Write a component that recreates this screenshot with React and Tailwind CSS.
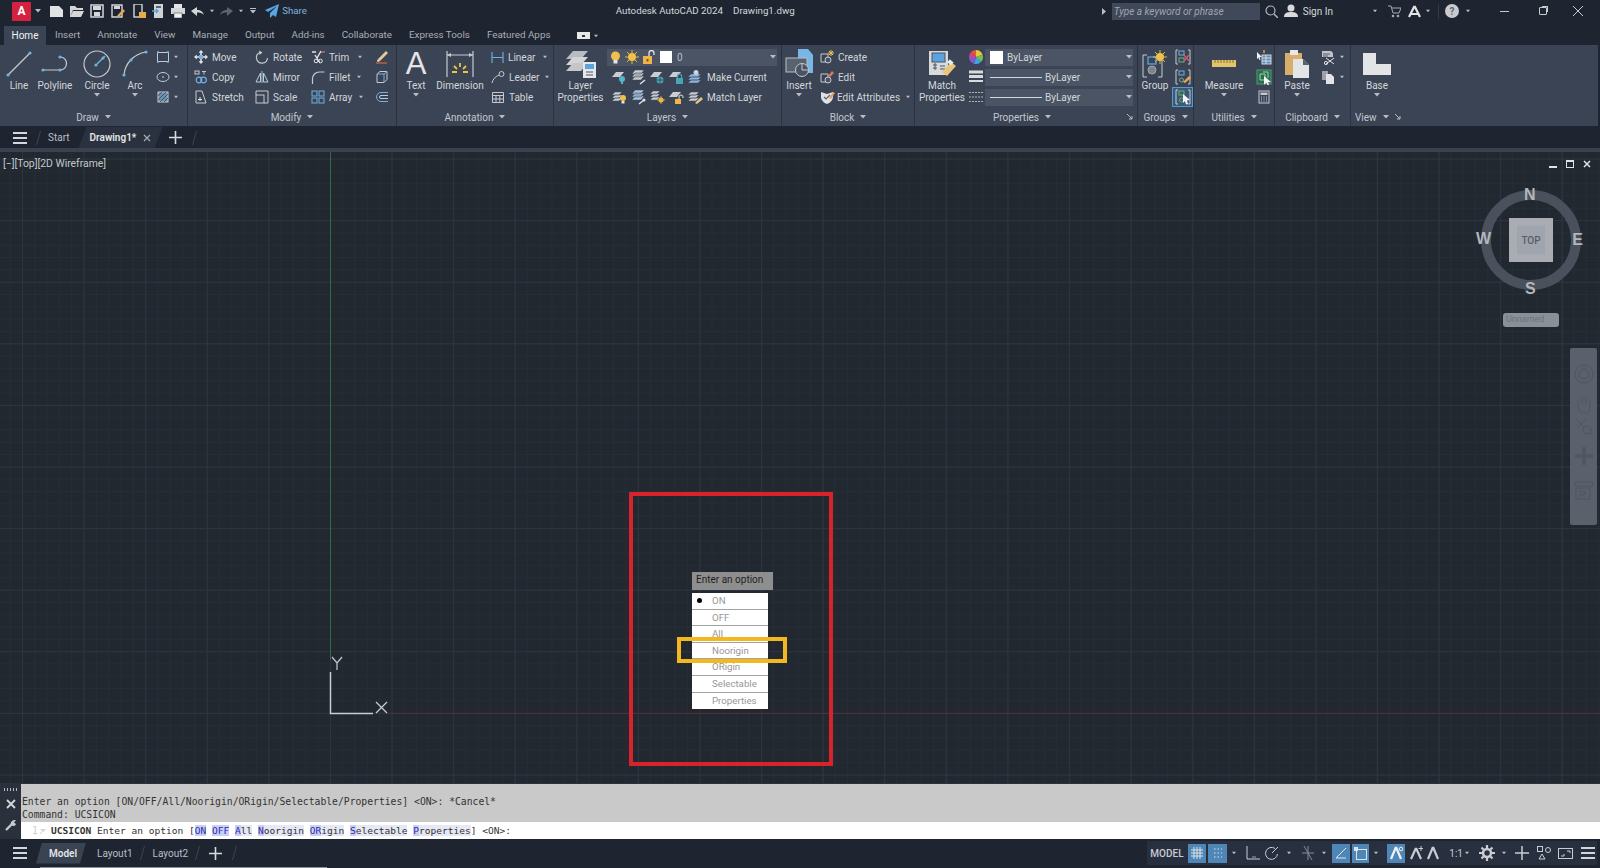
import React from "react";

// shared svg wrapper, w/h are also the viewBox so paths use real pixels
function Ic({ s = 16, w, h, children, className = "" }) {
  const W = w || s;
  const H = h || s;
  return (
    <svg width={W} height={H} viewBox={`0 0 ${W} ${H}`} fill="none" className={`shrink-0 ${className}`}>
      {children}
    </svg>
  );
}

const Caret = ({ className = "" }) => (
  <svg width="6" height="4" viewBox="0 0 6 4" className={`shrink-0 ${className}`}>
    <path d="M0 0h6L3 3.5z" fill="#b9bec6" />
  </svg>
);

const Dot = ({ x, y }) => <circle cx={x} cy={y} r="1.6" fill="#6fb2e4" />;
const LINE = "#c6cad0";
const BLUE = "#6fb2e4";

/* ---------- draw icons ---------- */
const LineIcon = () => (
  <Ic w={26} h={27}>
    <path d="M2 25L24 3" stroke={LINE} strokeWidth="1.2" />
    <Dot x={2} y={25} />
    <Dot x={24} y={3} />
  </Ic>
);
const PolylineIcon = () => (
  <Ic w={28} h={20}>
    <path d="M2 16h17c4 0 6.5-3 6.5-6.5S23 3 19 3" stroke={LINE} strokeWidth="1.2" />
    <Dot x={2} y={16} />
    <Dot x={19} y={16} />
    <Dot x={19} y={3} />
  </Ic>
);
const CircleIcon = () => (
  <Ic w={28} h={28}>
    <circle cx="14" cy="14" r="13" stroke={LINE} strokeWidth="1.2" />
    <path d="M14 14l8-8" stroke={BLUE} strokeWidth="1.4" />
    <Dot x={13} y={15} />
    <Dot x={20} y={8} />
  </Ic>
);
const ArcIcon = () => (
  <Ic w={26} h={27}>
    <path d="M2 25C3 13 12 4 24 2" stroke={LINE} strokeWidth="1.2" />
    <Dot x={2} y={25} />
    <Dot x={9} y={10} />
    <Dot x={24} y={2} />
  </Ic>
);
const RectIcon = () => (
  <Ic s={14}>
    <rect x="1.5" y="2.5" width="11" height="9" stroke={LINE} />
    <path d="M1 2h2M11 2h2M1 12h2M11 12h2" stroke={BLUE} strokeWidth="1.4" />
  </Ic>
);
const EllipseIcon = () => (
  <Ic s={14}>
    <ellipse cx="7" cy="7" rx="6" ry="4.5" stroke={LINE} />
    <circle cx="7" cy="7" r="1" fill={BLUE} />
  </Ic>
);
const HatchIcon = () => (
  <Ic s={14}>
    <rect x="2" y="2" width="10" height="10" fill="#6f8fb0" stroke={LINE} />
    <path d="M2 6l4-4M2 10l8-8M4 12l8-8M8 12l4-4" stroke="#2f3d50" strokeWidth=".7" />
  </Ic>
);

/* ---------- modify icons ---------- */
const MoveIcon = () => (
  <Ic s={14}>
    <path d="M7 1v12M1 7h12" stroke="#e2e4e7" strokeWidth="1.6" />
    <path d="M7 0l2.5 2.8h-5zM7 14l2.5-2.8h-5zM0 7l2.8-2.5v5zM14 7l-2.8-2.5v5z" fill="#e2e4e7" />
    <rect x="5" y="5" width="4" height="4" fill={BLUE} />
  </Ic>
);
const RotateIcon = () => (
  <Ic s={14}>
    <path d="M5 2.5A5.5 5.5 0 1 0 12.5 8" stroke={LINE} strokeWidth="1.2" />
    <path d="M4 .5l3.5 2-3 2.5z" fill={LINE} />
  </Ic>
);
const TrimIcon = () => (
  <Ic s={14}>
    <path d="M1 2h4M4 5l5 8M10 1L6 8" stroke="#e2e4e7" strokeWidth="1.4" />
    <circle cx="9.5" cy="11" r="1.8" stroke="#e2e4e7" />
    <circle cx="5" cy="11" r="1.8" stroke="#e2e4e7" />
    <path d="M10 2h4" stroke="#dd7777" strokeWidth="1.2" />
  </Ic>
);
const EraseIcon = () => (
  <Ic s={14}>
    <path d="M3 9l8-8 2 2-8 8z" fill="#e5c99a" />
    <path d="M3 9l2 2-2 1-1-1z" fill="#e2e4e7" />
    <path d="M1 13h11" stroke="#d9693a" strokeWidth="1.2" />
  </Ic>
);
const CopyIcon = () => (
  <Ic s={14}>
    <rect x="1" y="1" width="4" height="3" stroke={LINE} />
    <path d="M8 1.5h4M10 1.5v3" stroke={LINE} />
    <circle cx="5" cy="10" r="2.8" stroke={BLUE} strokeWidth="1.2" />
    <circle cx="9.5" cy="10" r="2.8" stroke={BLUE} strokeWidth="1.2" />
  </Ic>
);
const MirrorIcon = () => (
  <Ic s={14}>
    <path d="M7 1v12" stroke={BLUE} strokeWidth="1.2" />
    <path d="M5.5 3v9H1zM8.5 3v9H13z" stroke={LINE} />
  </Ic>
);
const FilletIcon = () => (
  <Ic s={14}>
    <path d="M1.5 14V9c0-4 3-7 7-7h5" stroke={LINE} strokeWidth="1.2" />
  </Ic>
);
const BoxIcon = () => (
  <Ic s={14}>
    <path d="M2 4l3-2.5h7v8L9 12.5H2z" stroke={LINE} />
    <path d="M2 4h7v8.500M9 4l3-2.5" stroke={BLUE} />
  </Ic>
);
const StretchIcon = () => (
  <Ic s={14}>
    <path d="M2 1h6l4 12H2z" stroke={LINE} />
    <path d="M6 7v4M4 9.5h4" stroke="#e2e4e7" />
  </Ic>
);
const ScaleIcon = () => (
  <Ic s={14}>
    <rect x="1" y="5" width="8" height="8" stroke={LINE} />
    <path d="M1 5V1h12v12H9" stroke={LINE} />
  </Ic>
);
const ArrayIcon = () => (
  <Ic s={14}>
    <rect x="1" y="1" width="5" height="5" stroke={BLUE} />
    <rect x="8" y="1" width="5" height="5" stroke={BLUE} />
    <rect x="1" y="8" width="5" height="5" stroke={BLUE} />
    <rect x="8" y="8" width="5" height="5" stroke={BLUE} />
  </Ic>
);
const OffsetIcon = () => (
  <Ic s={14}>
    <path d="M13 2.5H6a4.500 4.500 0 0 0 0 9h7" stroke={BLUE} />
    <path d="M13 5.5H6a1.500 1.500 0 0 0 0 3h7" stroke={LINE} />
  </Ic>
);

/* ---------- annotation icons ---------- */
const DimensionIcon = () => (
  <Ic w={28} h={28}>
    <path d="M1 1v26M27 1v26" stroke={LINE} strokeWidth="1.2" />
    <path d="M1 5h26" stroke={LINE} />
    <path d="M1 5l4-2v4zM27 5l-4-2v4z" fill={LINE} />
    <path d="M14 13v4M8 16l3 3M20 16l-3 3M6 22h5M22 22h-5" stroke="#e6c64a" strokeWidth="1.8" />
  </Ic>
);
const LinearIcon = () => (
  <Ic s={13}>
    <path d="M1 1v11M12 1v11M1 6.5h11" stroke={BLUE} strokeWidth="1.1" />
  </Ic>
);
const LeaderIcon = () => (
  <Ic s={14}>
    <path d="M1 13c1-4 3-6 7-8" stroke={LINE} />
    <circle cx="10.5" cy="4" r="2.5" stroke={LINE} />
  </Ic>
);
const TableIcon = () => (
  <Ic s={14}>
    <path d="M1.5 2.5h11v10h-11zM1.5 5.5h11M1.5 9h11M5 5.5v7M8.8 5.5v7" stroke={LINE} />
  </Ic>
);

/* ---------- layer icons ---------- */
const LayerPropsIcon = () => (
  <Ic w={32} h={28}>
    <path d="M1 9L8 1h15l-7 8z" fill="#b8bcc0" />
    <path d="M1 15L8 7h15l-7 8z" fill="#d2d4d6" />
    <path d="M1 21L8 13h15l-7 8z" fill="#c4c6c8" />
    <rect x="18" y="12" width="13" height="16" fill="#e6e7e8" />
    <rect x="20" y="14" width="9" height="5" fill="#5ba3dd" />
    <path d="M21 22h7M21 25h7" stroke="#4a5464" />
  </Ic>
);
const Bulb = ({ on = "#f1c04a" }) => (
  <Ic s={13}>
    <circle cx="6.5" cy="5" r="4.5" fill={on} />
    <rect x="4.5" y="9" width="4" height="3.5" fill="#e2e4e7" />
  </Ic>
);
const Sun = () => (
  <Ic s={14}>
    <circle cx="7" cy="7" r="4" fill="#f1c04a" />
    <path d="M7 0v3M7 11v3M0 7h3M11 7h3M2 2l2 2M10 10l2 2M12 2l-2 2M4 10l-2 2" stroke="#e3b23e" />
  </Ic>
);
const OpenLock = () => (
  <Ic s={14}>
    <rect x="1" y="6" width="9" height="8" fill="#f0b447" />
    <path d="M7 6V3a2.5 2.5 0 0 1 5 0v2" stroke="#e2e4e7" strokeWidth="1.3" />
    <rect x="4.5" y="9" width="2" height="2.5" fill="#7b5a1c" />
  </Ic>
);
const LayerBase = ({ children }) => (
  <Ic s={16}>
    <path d="M1 8l4-5h8l-4 5z" fill="#c9ccd0" />
    {children}
  </Ic>
);
const L1 = () => <LayerBase><circle cx="11" cy="10" r="3" fill="#56b6c9" /><rect x="10" y="12.5" width="2" height="2.5" fill="#56b6c9" /></LayerBase>;
const L2 = () => (
  <Ic s={16}>
    <path d="M2 5l3-4h9l-3 4zM2 8l3-4h9l-3 4zM2 11l3-4h9l-3 4z" fill="#c9ccd0" stroke="#3b4454" strokeWidth=".5" />
    <path d="M10 15l5-4" stroke="#e2e4e7" strokeWidth="1.4" />
  </Ic>
);
const L3 = () => <LayerBase><circle cx="11" cy="11" r="3.5" fill="#4ba3b8" /><path d="M7.5 11h7M11 7.5v7" stroke="#2c3a48" strokeWidth=".7" /></LayerBase>;
const L4 = () => <LayerBase><rect x="8" y="9" width="7" height="6" fill="#4ba3b8" /><path d="M9.5 9V7a2 2 0 0 1 4 0v2" stroke="#4ba3b8" strokeWidth="1.2" /></LayerBase>;
const MakeCurrentIcon = () => (
  <Ic s={16}>
    <path d="M1 8l3-3h10l-3 3zM1 11l3-3h10l-3 3zM1 14l3-3h10l-3 3z" fill="#8db7dc" stroke="#3b4454" strokeWidth=".5" />
    <circle cx="9" cy="3.5" r="2.5" fill="#c6d6e6" />
  </Ic>
);
const L5 = () => (
  <Ic s={16}>
    <path d="M1 6l3-3h7L8 6zM1 9l3-3h7L8 9zM1 12l3-3h7l-3 3z" fill="#c9ccd0" stroke="#3b4454" strokeWidth=".5" />
    <circle cx="12" cy="9" r="3" fill="#f1c04a" />
    <rect x="10.5" y="12" width="3" height="2.5" fill="#e2e4e7" />
  </Ic>
);
const L6 = () => (
  <Ic s={16}>
    <path d="M2 5l3-4h9l-3 4zM2 8l3-4h9l-3 4zM2 11l3-4h9l-3 4z" fill="#a9c4de" stroke="#3b4454" strokeWidth=".5" />
    <path d="M9 15l5-4" stroke="#e2e4e7" strokeWidth="1.4" />
    <circle cx="14" cy="11" r="1.5" fill="#e2e4e7" />
  </Ic>
);
const L7 = () => (
  <Ic s={16}>
    <path d="M1 5l3-3h7L8 5zM1 8l3-3h7L8 8zM1 11l3-3h7l-3 3z" fill="#c9ccd0" stroke="#3b4454" strokeWidth=".5" />
    <circle cx="12" cy="11" r="2.5" fill="#f1c04a" />
    <path d="M12 7v8M8 11h8" stroke="#e3b23e" strokeWidth=".8" />
  </Ic>
);
const L8 = () => (
  <LayerBase>
    <rect x="7" y="10" width="6" height="5" fill="#f0b447" />
    <path d="M11 10V8a2 2 0 0 1 4 0v1" stroke="#e2e4e7" />
  </LayerBase>
);
const MatchLayerIcon = () => (
  <Ic s={16}>
    <path d="M1 6l3-3h8L9 6zM1 9l3-3h8L9 9zM1 12l3-3h8l-3 3z" fill="#c9ccd0" stroke="#3b4454" strokeWidth=".5" />
    <path d="M8 14l6-6 2 2-6 5z" fill="#e8c57a" />
  </Ic>
);

/* ---------- block / props ---------- */
const InsertIcon = () => (
  <Ic w={28} h={30}>
    <path d="M13 0h10l5 6v18H13z" fill="#78b6e8" />
    <rect x="1" y="9" width="21" height="14" fill="#59636f" stroke="#b9bec4" />
    <circle cx="17" cy="21" r="6.5" fill="#4a5464" stroke="#c6cad0" />
    <path d="M17 21v-6M17 21h6" stroke="#c6cad0" />
  </Ic>
);
const CreateIcon = () => (
  <Ic s={14}>
    <path d="M1 4h7v8H1z" stroke={LINE} />
    <circle cx="8" cy="10" r="3" fill="#4a5464" stroke={LINE} />
    <path d="M11 0v6M8 3h6M9 1l4 4M13 1L9 5" stroke="#f1c04a" />
  </Ic>
);
const EditIcon = () => (
  <Ic s={14}>
    <path d="M1 4h7v8H1z" stroke={LINE} />
    <circle cx="8" cy="10" r="3" fill="#4a5464" stroke={LINE} />
    <path d="M8 6l4-5 2 2-4 4z" fill="#d97a5a" />
  </Ic>
);
const AttrIcon = () => (
  <Ic s={15}>
    <path d="M1 2l6 2 6-2v5c0 3-3 6-6 7-3-1-6-4-6-7z" fill="#dfe1e3" />
    <path d="M4 7l2 2 4-4" stroke="#5b6575" strokeWidth="1.2" />
    <path d="M9 8l4-6 2 1-4 6z" fill="#e8a15a" />
  </Ic>
);
const MatchPropsIcon = () => (
  <Ic w={28} h={28}>
    <rect x="1" y="1" width="19" height="24" fill="#d7d9db" />
    <rect x="4" y="3" width="13" height="9" fill="#5ba3dd" stroke="#4a5464" />
    <path d="M5 15h4M5 18h4M7 13v7M12 19h5M12 16h5" stroke="#4a5464" />
    <path d="M14 22l9-10 5 4-9 10z" fill="#e8c57a" />
    <rect x="20" y="10" width="5" height="4" fill="#e9eaeb" transform="rotate(40 22 12)" />
  </Ic>
);
const ColorWheel = () => (
  <svg width="14" height="14" viewBox="0 0 14 14" className="shrink-0">
    <path d="M7 7V0a7 7 0 0 1 6.6 4.7z" fill="#e9c33c" />
    <path d="M7 7l6.6-2.3A7 7 0 0 1 12 12z" fill="#74c054" />
    <path d="M7 7l5 5a7 7 0 0 1-7 1.7z" fill="#3ea6d8" />
    <path d="M7 7l-2 6.7A7 7 0 0 1 0 7z" fill="#8657c9" />
    <path d="M7 7H0a7 7 0 0 1 2-5z" fill="#d8408c" />
    <path d="M7 7L2 2a7 7 0 0 1 5-2z" fill="#e8562f" />
  </svg>
);
const WeightIcon = () => (
  <Ic s={14}>
    <path d="M0 2h14M0 6.5h14" stroke="#d8dadc" strokeWidth="3" />
    <path d="M0 11h14" stroke="#d8dadc" strokeWidth="2" />
  </Ic>
);
const LinetypeIcon = () => (
  <Ic s={14}>
    <path d="M0 2.5h14M0 7h14M0 11.5h14" stroke="#aeb2b8" strokeDasharray="2 1" />
  </Ic>
);

/* ---------- groups etc ---------- */
const GroupIcon = () => (
  <Ic w={26} h={28}>
    <path d="M5 5H1v22h4M18 5h2v22h-4" stroke={LINE} />
    <rect x="6" y="7" width="8" height="7" stroke="#5ba3dd" strokeWidth="1.3" />
    <circle cx="10" cy="20" r="4" fill="#7b838d" stroke="#a2a7ae" />
    <circle cx="18" cy="7" r="4" fill="#f1c04a" />
    <path d="M18 0v14M11 7h14M13 2l10 10M23 2L13 12" stroke="#f1c04a" strokeWidth=".9" />
  </Ic>
);
const Brk = ({ children }) => (
  <Ic s={16}>
    <path d="M3 1H1v14h2M13 1h2v14h-2" stroke={LINE} />
    {children}
  </Ic>
);
const G1 = () => <Brk><rect x="4" y="2" width="5" height="4" stroke={BLUE} /><rect x="4" y="9" width="5" height="4" stroke="#77aa88" /><path d="M9 6l5 6M14 6l-5 6" stroke="#d65a6a" strokeWidth="1.3" /></Brk>;
const G2 = () => <Brk><rect x="4" y="2" width="5" height="4" stroke={BLUE} /><circle cx="6.5" cy="11" r="2" stroke="#77aa88" /><path d="M8 13l6-6 2 2-6 5z" fill="#e8a45a" /></Brk>;
const G3 = () => <Brk><rect x="4" y="2" width="5" height="4" stroke="#5fb56a" /><circle cx="6.5" cy="11" r="2" stroke="#5fb56a" /><path d="M8 5l7 6-3 .5 1 3.5-2 .5-1-3.5-2 2z" fill="#f2f3f4" /></Brk>;
const RulerIcon = () => (
  <Ic w={26} h={9}>
    <rect x="1" y="1" width="24" height="7" fill="#e3c46d" />
    <path d="M4 1v3M7 1v3M10 1v3M13 1v3M16 1v3M19 1v3M22 1v3" stroke="#8a7330" />
  </Ic>
);
const U1 = () => (
  <Ic s={16}>
    <rect x="6" y="6" width="9" height="9" stroke="#cfd3d8" fill="#5a8fbf" />
    <path d="M6 9h9M6 12h9M10 6v9" stroke="#d8dadc" />
    <path d="M1 3l5 5-2.5.3 1 2.5-1 .5-1-2.5L1 10z" fill="#f2f3f4" />
    <path d="M8 1v3" stroke="#e8a45a" strokeWidth="1.4" />
  </Ic>
);
const U2 = () => (
  <Ic s={16}>
    <rect x="1" y="1" width="14" height="14" fill="#2e6a4f" stroke="#4f9a70" />
    <path d="M4 5h5v6H4zM7 3h5v6" stroke="#86dca8" />
    <path d="M8 7l7 6-3 .3 1 2.5-1.500.5-1-2.5-2.5 2z" fill="#f2f3f4" />
  </Ic>
);
const CalcIcon = () => (
  <Ic s={14}>
    <rect x="2" y="1" width="10" height="12" stroke={LINE} />
    <rect x="3.5" y="2.5" width="7" height="2.5" fill={LINE} />
    <path d="M4 7h1M6.5 7h1M9 7h1M4 9h1M6.5 9h1M9 9h1M4 11h1M6.5 11h1M9 11h1" stroke={LINE} />
  </Ic>
);
const PasteIcon = () => (
  <Ic w={24} h={28}>
    <path d="M0 3h17v22H0z" fill="#d9ad6a" />
    <rect x="5" y="0" width="8" height="5" fill="#e6e7e8" />
    <path d="M8 9h10l6 6v13H8z" fill="#e3e4e5" />
    <path d="M18 9v6h6z" fill="#555f6d" />
  </Ic>
);
const CutIcon = () => (
  <Ic s={15}>
    <path d="M1 1h9l2 2v4H1z" fill="#bfc2c6" />
    <path d="M2 4h7M2 6h5" stroke="#555f6d" />
    <path d="M5 8l8 6M13 8l-8 6" stroke="#e2e4e7" />
    <circle cx="5" cy="13" r="1.6" stroke="#e2e4e7" />
  </Ic>
);
const CopyClipIcon = () => (
  <Ic s={14}>
    <path d="M1 1h6v9H1z" fill="#9ea2a8" />
    <path d="M5 4h5l3 3v7H5z" fill="#e2e4e7" />
  </Ic>
);
const BaseIcon = () => (
  <Ic w={28} h={22}>
    <path d="M0 0h13v11h15v11H0z" fill="#e3e4e5" />
  </Ic>
);

/* ---------- layout pieces ---------- */
function Panel({ className, title, titleClass = "justify-center", extra, children }) {
  return (
    <div className={`flex flex-col border-r border-[#2b323e] ${className}`}>
      <div className="flex h-[63px] pt-[2px]">{children}</div>
      <div className={`flex h-[18px] items-center gap-[6px] text-[#c3c7ce] ${titleClass}`}>
        <span>{title}</span>
        <Caret />
        {extra}
      </div>
    </div>
  );
}

function BigTool({ className, icon, label, label2, caret }) {
  return (
    <div className={`flex flex-col items-center ${className}`}>
      <div className="flex h-[33px] items-center justify-center">{icon}</div>
      <span className="whitespace-nowrap leading-[12px]">{label}</span>
      {label2 && <span className="whitespace-nowrap leading-[12px]">{label2}</span>}
      {caret && <Caret className="mt-[1px]" />}
    </div>
  );
}

function Row({ className = "", children }) {
  return <div className={`flex h-[20px] items-center ${className}`}>{children}</div>;
}

function Tool({ icon, label, caretClass }) {
  return (
    <Row className="gap-[4px]">
      {icon}
      <span className="whitespace-nowrap">{label}</span>
      {caretClass && <Caret className={caretClass} />}
    </Row>
  );
}

function Select({ className = "", children }) {
  return (
    <div className={`flex h-[17px] items-center bg-[#4a5464] ${className}`}>
      {children}
      <Caret className="ml-auto mr-[1px]" />
    </div>
  );
}

const QUICK_TABS = ["Insert", "Annotate", "View", "Manage", "Output", "Add-ins", "Collaborate", "Express Tools", "Featured Apps"];

function TitleBar() {
  return (
    <div className="flex h-[26px] items-start bg-[#1e2531]">
      <div className="flex h-[22px] w-full items-center">
        <div className="ml-[12px] flex h-[19px] w-[19px] items-center justify-center rounded-[1px] bg-[#d4213f] text-[12px] font-bold text-white">A</div>
        <Caret className="ml-[4px]" />
        <div className="ml-[9px] flex items-center gap-[6.7px]">
          <Ic s={13}><path d="M0 1h9l4 4v7H0z" fill="#e2e3e5" /></Ic>
          <Ic s={14}><path d="M0 2h5l2 2h6v2H3L0 13zM3 7h11l-3 6H0z" fill="#d4d6d9" /></Ic>
          <Ic s={14}><path d="M1 1h12v12H1z" stroke="#d4d6d9" strokeWidth="1.5" /><rect x="3" y="2" width="8" height="4" fill="#d4d6d9" /><rect x="4" y="8" width="6" height="4" fill="#d4d6d9" /></Ic>
          <Ic s={14}><path d="M1 1h10v12H1z" stroke="#d4d6d9" strokeWidth="1.4" /><rect x="3" y="2" width="6" height="3" fill="#d4d6d9" /><path d="M6 12l6-7 2 2-6 6z" fill="#e2a75a" /></Ic>
          <Ic s={14}><rect x="2" y="0" width="8" height="13" stroke="#d4d6d9" strokeWidth="1.4" /><rect x="7" y="8" width="7" height="6" fill="#e6ae4a" /></Ic>
          <Ic w={12} h={14}><rect x="2" y="0" width="9" height="14" fill="#cfd2d6" /><path d="M0 7h6M4 5l2 2-2 2" stroke="#5ba3dd" strokeWidth="1.3" /><rect x="4" y="2" width="5" height="2" fill="#5b6575" /></Ic>
          <Ic s={14}><rect x="3" y="0" width="8" height="4" fill="#e2e3e5" /><rect x="0" y="4" width="14" height="6" fill="#d4d6d9" /><rect x="3" y="9" width="8" height="5" fill="#f0f1f2" stroke="#333333" strokeWidth=".5" /></Ic>
        </div>
        <Ic s={13} className="ml-[6px]"><path d="M0 6l6-4v3c4 0 6 2 7 5-2-2-4-2.5-7-2.5V11z" fill="#d4d6d9" /></Ic>
        <Caret className="ml-[5px] scale-75" />
        <Ic s={13} className="ml-[5px]"><path d="M13 6L7 2v3C3 5 1 7 0 10c2-2 4-2.5 7-2.5V11z" fill="#5c6470" /></Ic>
        <Caret className="ml-[5px] scale-75" />
        <div className="ml-[6px] flex flex-col items-center gap-[1px]">
          <div className="h-[1px] w-[6px] bg-[#b9bec6]" />
          <Caret />
        </div>
        <Ic s={14} className="ml-[9px]"><path d="M14 0L0 6l3 2 9-6-7 7v5l3-3 3 2z" fill="#59a6e4" /></Ic>
        <span className="ml-[3px] text-[9.7px] text-[#7fb4e0]">Share</span>
        <span className="ml-[309px] whitespace-nowrap text-[9.75px] text-[#d5d8dd]">Autodesk AutoCAD 2024</span>
        <span className="ml-[10px] whitespace-nowrap text-[9.75px] text-[#d5d8dd]">Drawing1.dwg</span>
        <svg width="4" height="7" viewBox="0 0 4 7" className="ml-[307px] shrink-0"><path d="M0 0l4 3.5L0 7z" fill="#b9bec6" /></svg>
        <div className="ml-[6px] flex h-[17px] w-[148px] items-center bg-[#3f4959] pl-[2px] italic text-[#a0a6b0]">Type a keyword or phrase</div>
        <Ic s={13} className="ml-[5px]"><circle cx="5.5" cy="5.5" r="4.5" stroke="#b4b8be" strokeWidth="1.2" /><path d="M9 9l4 4" stroke="#b4b8be" strokeWidth="1.5" /></Ic>
        <Ic s={14} className="ml-[6px]"><circle cx="7" cy="4" r="3.5" fill="#d8dadc" /><path d="M0 13c0-4 3-5 7-5s7 1 7 5z" fill="#d8dadc" /></Ic>
        <span className="ml-[5px] text-[#d5d8dd]">Sign In</span>
        <Caret className="ml-[39px] scale-75" />
        <Ic s={13} className="ml-[10px]"><path d="M0 1h3l2 7h6l2-5H4" stroke="#a6aab0" /><circle cx="5" cy="11" r="1.3" fill="#a6aab0" /><circle cx="10" cy="11" r="1.3" fill="#a6aab0" /></Ic>
        <Ic s={13} className="ml-[7px]"><path d="M6.5 1L1 12M6.5 1L12 12M3 9h7" stroke="#e2e3e5" strokeWidth="2.2" /></Ic>
        <Caret className="ml-[4px] scale-75" />
        <div className="ml-[7px] h-[15px] w-[1px] bg-[#323a47]" />
        <div className="ml-[6px] flex h-[14px] w-[14px] items-center justify-center rounded-full bg-[#c9cbce] text-[10px] font-bold text-[#5b6472]">?</div>
        <Caret className="ml-[6px] scale-75" />
        <div className="ml-[29px] h-[1px] w-[9px] bg-[#c8cbd0]" />
        <div className="relative ml-[30px] h-[8px] w-[8px] rounded-[1px] border border-[#c8cbd0]">
          <div className="absolute -right-[2px] -top-[2px] h-[6px] w-[6px] border-r border-t border-[#c8cbd0]" />
        </div>
        <Ic s={12} className="ml-[25px]"><path d="M1 1l10 10M11 1L1 11" stroke="#c8cbd0" /></Ic>
      </div>
    </div>
  );
}

function RibbonTabs() {
  return (
    <div className="flex h-[19px] items-center bg-[#1e2531]">
      <div className="ml-[4px] flex h-full w-[42px] items-center justify-center bg-[#3b4454] text-[#f0f1f3]">Home</div>
      <div className="ml-[9px] flex items-center gap-[17px] text-[9.85px] text-[#a9aeb7]">
        {QUICK_TABS.map((t) => (
          <span key={t} className="whitespace-nowrap">{t}</span>
        ))}
      </div>
      <div className="ml-[26px] flex h-[7px] w-[13px] items-center justify-center bg-[#e6e7e9]">
        <div className="h-[2px] w-[3px] bg-[#333333]" />
      </div>
      <Caret className="ml-[3px] scale-75" />
    </div>
  );
}

function Ribbon() {
  return (
    <div className="flex h-[81px] bg-[#1e2531] pr-[2px]">
      <div className="flex flex-1 bg-[#3b4454] text-[#d3d6db]">
        <Panel className="w-[188px]" title="Draw">
          <BigTool className="ml-[4px] w-[30px]" icon={<LineIcon />} label="Line" />
          <BigTool className="w-[42px]" icon={<PolylineIcon />} label="Polyline" />
          <BigTool className="w-[42px]" icon={<CircleIcon />} label="Circle" caret />
          <BigTool className="w-[34px]" icon={<ArcIcon />} label="Arc" caret />
          <div className="ml-[4px] flex flex-col">
            <Row className="gap-[3px]"><RectIcon /><Caret className="scale-75" /></Row>
            <Row className="gap-[3px]"><EllipseIcon /><Caret className="scale-75" /></Row>
            <Row className="gap-[3px]"><HatchIcon /><Caret className="scale-75" /></Row>
          </div>
        </Panel>
        <Panel className="w-[209px]" title="Modify">
          <div className="ml-[6px] flex w-[61px] flex-col">
            <Tool icon={<MoveIcon />} label="Move" />
            <Tool icon={<CopyIcon />} label="Copy" />
            <Tool icon={<StretchIcon />} label="Stretch" />
          </div>
          <div className="flex w-[56px] flex-col">
            <Tool icon={<RotateIcon />} label="Rotate" />
            <Tool icon={<MirrorIcon />} label="Mirror" />
            <Tool icon={<ScaleIcon />} label="Scale" />
          </div>
          <div className="flex w-[60px] flex-col">
            <Tool icon={<TrimIcon />} label="Trim" caretClass="ml-[4px] scale-75" />
            <Tool icon={<FilletIcon />} label="Fillet" caretClass="ml-[2px] scale-75" />
            <Tool icon={<ArrayIcon />} label="Array" caretClass="ml-[2px] scale-75" />
          </div>
          <div className="ml-[4px] flex flex-col">
            <Row><EraseIcon /></Row>
            <Row><BoxIcon /></Row>
            <Row><OffsetIcon /></Row>
          </div>
        </Panel>
        <Panel className="w-[157px]" title="Annotation">
          <BigTool
            className="w-[38px]"
            icon={<span className="font-['Liberation_Sans',sans-serif] text-[31px] leading-none text-[#e4e5e7]">A</span>}
            label="Text"
            caret
          />
          <BigTool className="w-[50px]" icon={<DimensionIcon />} label="Dimension" />
          <div className="ml-[6px] flex flex-col">
            <Tool icon={<LinearIcon />} label="Linear" caretClass="ml-[3px] scale-75" />
            <Tool icon={<LeaderIcon />} label="Leader" caretClass="ml-[1px] scale-75" />
            <Tool icon={<TableIcon />} label="Table" />
          </div>
        </Panel>
        <Panel className="w-[228px]" title="Layers">
          <BigTool className="w-[53px]" icon={<LayerPropsIcon />} label="Layer" label2="Properties" />
          <div className="flex w-[170px] flex-col">
            <Row>
              <Select className="w-full gap-[3px] pl-[2px]">
                <Bulb />
                <Sun />
                <OpenLock />
                <div className="ml-[1px] h-[12px] w-[12px] bg-white" />
                <span className="ml-[2px] text-[#b9bec6]">0</span>
              </Select>
            </Row>
            <Row className="gap-[3px] pl-[4px]">
              <L1 /><L2 /><L3 /><L4 /><MakeCurrentIcon />
              <span className="ml-[1px] whitespace-nowrap">Make Current</span>
            </Row>
            <Row className="gap-[3px] pl-[4px]">
              <L5 /><L6 /><L7 /><L8 /><MatchLayerIcon />
              <span className="ml-[1px] whitespace-nowrap">Match Layer</span>
            </Row>
          </div>
        </Panel>
        <Panel className="w-[133px]" title="Block">
          <BigTool className="w-[34px]" icon={<InsertIcon />} label="Insert" caret />
          <div className="ml-[4px] flex flex-col">
            <Tool icon={<CreateIcon />} label="Create" />
            <Tool icon={<EditIcon />} label="Edit" />
            <Row className="gap-[2px]">
              <AttrIcon />
              <span className="whitespace-nowrap">Edit Attributes</span>
              <Caret className="ml-[3px] scale-75" />
            </Row>
          </div>
        </Panel>
        <Panel
          className="w-[223px]"
          title="Properties"
          titleClass="pl-[78px]"
          extra={
            <svg width="6" height="6" viewBox="0 0 6 6" className="ml-auto mr-[4px]">
              <path d="M0 0l5 5M5 2v3H2" stroke="#b9bec6" fill="none" />
            </svg>
          }
        >
          <BigTool className="w-[54px]" icon={<MatchPropsIcon />} label="Match" label2="Properties" />
          <div className="flex flex-col">
            <Row className="gap-[2px]">
              <ColorWheel />
              <Select className="w-[148px] pl-[5px]">
                <div className="h-[13px] w-[13px] bg-white" />
                <span className="ml-[4px]">ByLayer</span>
              </Select>
            </Row>
            <Row className="gap-[2px]">
              <WeightIcon />
              <Select className="w-[148px] pl-[5px]">
                <div className="h-[1px] w-[52px] bg-[#d3d6db]" />
                <span className="ml-[3px]">ByLayer</span>
              </Select>
            </Row>
            <Row className="gap-[2px]">
              <LinetypeIcon />
              <Select className="w-[148px] pl-[5px]">
                <div className="h-[1px] w-[52px] bg-[#d3d6db]" />
                <span className="ml-[3px]">ByLayer</span>
              </Select>
            </Row>
          </div>
        </Panel>
        <Panel className="w-[56px]" title="Groups">
          <BigTool className="w-[34px]" icon={<GroupIcon />} label="Group" />
          <div className="flex w-[21px] flex-col items-center">
            <Row><G1 /></Row>
            <Row><G2 /></Row>
            <Row className="w-[21px] justify-center border border-[#4d9cd3] bg-[#3c5a77]"><G3 /></Row>
          </div>
        </Panel>
        <Panel className="w-[81px]" title="Utilities">
          <BigTool className="w-[60px]" icon={<RulerIcon />} label="Measure" caret />
          <div className="flex w-[20px] flex-col items-center">
            <Row><U1 /></Row>
            <Row><U2 /></Row>
            <Row><CalcIcon /></Row>
          </div>
        </Panel>
        <Panel className="w-[76px]" title="Clipboard">
          <BigTool className="w-[44px]" icon={<PasteIcon />} label="Paste" caret />
          <div className="ml-[2px] flex flex-col">
            <Row className="gap-[3px]"><CutIcon /><Caret className="scale-75" /></Row>
            <Row className="gap-[4px]"><CopyClipIcon /><Caret className="scale-75" /></Row>
          </div>
        </Panel>
        <div className="flex flex-1 flex-col">
          <div className="flex h-[63px] pt-[2px]">
            <BigTool className="w-[52px]" icon={<BaseIcon />} label="Base" caret />
          </div>
          <div className="flex h-[18px] items-center gap-[6px] pl-[4px] text-[#c3c7ce]">
            <span>View</span>
            <Caret />
            <svg width="6" height="6" viewBox="0 0 6 6"><path d="M0 0l5 5M5 2v3H2" stroke="#b9bec6" fill="none" /></svg>
          </div>
        </div>
      </div>
    </div>
  );
}

const Hamburger = ({ className = "" }) => (
  <div className={`flex w-[14px] shrink-0 flex-col gap-[3px] ${className}`}>
    <div className="h-[2px] bg-[#d3d6db]" />
    <div className="h-[2px] bg-[#d3d6db]" />
    <div className="h-[2px] bg-[#d3d6db]" />
  </div>
);
const Slash = ({ className = "" }) => (
  <svg width="5" height="14" viewBox="0 0 5 14" className={`shrink-0 ${className}`}>
    <path d="M4.5 0L.5 14" stroke="#3c4451" />
  </svg>
);
const Plus = ({ className = "" }) => (
  <Ic s={13} className={className}>
    <path d="M6.5 0v13M0 6.5h13" stroke="#d9dbdf" strokeWidth="1.6" />
  </Ic>
);

function DocTabs() {
  return (
    <div className="flex h-[22px] items-center bg-[#1e2531] pt-[1px] text-[#b9bec6]">
      <Hamburger className="ml-[13px]" />
      <Slash className="ml-[9px]" />
      <span className="ml-[7px]">Start</span>
      <div className="ml-[9px] flex h-full w-[84px] items-center bg-[#2b323f] pl-[11px] [clip-path:polygon(8px_0,100%_0,calc(100%-8px)_100%,0_100%)]">
        <span className="font-semibold text-[#e3e5e8]">Drawing1*</span>
        <Ic s={8} className="ml-[7px]"><path d="M1 1l6 6M7 1L1 7" stroke="#a6abb3" strokeWidth="1.3" /></Ic>
      </div>
      <Plus className="ml-[6px]" />
      <Slash className="ml-[10px]" />
    </div>
  );
}

function ViewCube() {
  const letter = "absolute font-['Liberation_Sans',sans-serif] text-[16px] font-bold leading-none text-[#b3b6bb]";
  return (
    <div className="absolute left-[1481px] top-[38px] h-[100px] w-[100px] rounded-full border-[10px] border-[#4a515d]">
      <div className="absolute left-[18px] top-[18px] flex h-[44px] w-[44px] items-center justify-center bg-[#a9adb3]">
        <div className="flex h-[28px] w-[28px] items-center justify-center bg-[#a0a4ac] text-[10px] font-medium text-[#555e6b]">TOP</div>
      </div>
      <span className={`${letter} -top-[13px] left-[33px]`}>N</span>
      <span className={`${letter} -bottom-[17px] left-[34px]`}>S</span>
      <span className={`${letter} -left-[15px] top-[31px]`}>W</span>
      <span className={`${letter} -right-[12px] top-[32px]`}>E</span>
    </div>
  );
}

function NavBar() {
  const c = "#4f5661";
  return (
    <div className="absolute left-[1570px] top-[196px] flex h-[177px] w-[27px] flex-col items-center rounded-[2px] bg-[#5a616c] pt-[16px]">
      <Ic s={20}><circle cx="10" cy="10" r="9" stroke={c} /><circle cx="10" cy="10" r="5" stroke={c} /></Ic>
      <div className="mt-[10px]"><Ic s={20}><path d="M4 12V6M8 10V3M12 10V3M16 11V6M4 12c0 5 3 7 7 7s5-3 5-8" stroke={c} /></Ic></div>
      <div className="mt-[3px]"><Ic s={20}><path d="M2 2l9 9M12 2l-9 9" stroke={c} /><circle cx="13" cy="13" r="4" stroke={c} /><path d="M16 16l3 3" stroke={c} /></Ic></div>
      <div className="mt-[9px]"><Ic s={20}><path d="M10 1v18M1 10h18" stroke={c} strokeWidth="3" /></Ic></div>
      <div className="mt-[15px]"><Ic s={20}><path d="M1 1h18v4H1zM2 7h14v11H2z" stroke={c} /><path d="M6 9l6 3-6 3z" stroke={c} /></Ic></div>
    </div>
  );
}

const MENU = ["ON", "OFF", "All", "Noorigin", "ORigin", "Selectable", "Properties"];

function Canvas() {
  return (
    <div className="relative flex-1 overflow-hidden bg-[#212830] [background-image:linear-gradient(to_right,#2e3540_1px,transparent_1px),linear-gradient(to_bottom,#2e3540_1px,transparent_1px),linear-gradient(to_right,#262d37_1px,transparent_1px),linear-gradient(to_bottom,#262d37_1px,transparent_1px)] [background-position:22px_6.6px] [background-size:61.6px_61.6px,61.6px_61.6px,12.32px_12.32px,12.32px_12.32px]">
      <span className="absolute left-[3px] top-[4px] whitespace-nowrap text-[10.4px] text-[#c4c8ce]">[−][Top][2D Wireframe]</span>

      {/* axes and ucs icon */}
      <svg width="1600" height="631" viewBox="0 0 1600 631" fill="none" className="absolute left-0 top-0">
        <path d="M330.5 0V508" stroke="#2f6b47" />
        <path d="M388 561.5H1600" stroke="#5a2b35" />
        <path d="M330.5 520V561.5H373" stroke="#c9ccd0" strokeWidth="1.5" />
        <path d="M332 505l5 6 5-6M337 511v7" stroke="#bfc2c7" strokeWidth="1.3" />
        <path d="M376 550l11 11M387 550l-11 11" stroke="#c9ccd0" strokeWidth="1.3" />
      </svg>

      {/* viewport controls */}
      <div className="absolute left-[1549px] top-[8px] flex items-center gap-[9px]">
        <div className="mt-[5px] h-[2px] w-[8px] bg-[#e0e2e5]" />
        <div className="h-[8px] w-[8px] border border-t-2 border-[#e0e2e5]" />
        <Ic s={8}><path d="M1 1l6 6M7 1L1 7" stroke="#e0e2e5" strokeWidth="1.5" /></Ic>
      </div>

      <ViewCube />
      <div className="absolute left-[1503px] top-[161px] flex h-[14px] w-[56px] items-center rounded-[3px] bg-[#8a8f98] pl-[3px] text-[9px] text-[#6d727c]">Unnamed</div>
      <NavBar />

      {/* dynamic input popup */}
      <div className="absolute left-[692px] top-[420px] flex h-[18px] w-[81px] items-center bg-[#8e8e8e] pb-[3px] pl-[4px] text-[#1f1f1f]">Enter an option</div>
      <div className="absolute left-[692px] top-[441px] w-[76px] bg-white">
        {MENU.map((m, i) => (
          <div key={m} className="flex h-[16.6px] items-center border-b border-[#a3a3a3] pl-[20px] pt-[1px] text-[9.7px] text-[#979797] last:border-b-0">
            {i === 0 && <div className="absolute left-[5px] top-[5px] h-[5px] w-[5px] rounded-full bg-black" />}
            {m}
          </div>
        ))}
      </div>

      {/* annotations on top of the screenshot */}
      <div className="absolute left-[629px] top-[340px] h-[274px] w-[204px] border-[4px] border-[#d8232a]" />
      <div className="absolute left-[677px] top-[485px] h-[26px] w-[110px] border-[4px] border-[#f4b81e]" />
    </div>
  );
}

const OPTIONS = [
  ["ON", ""],
  ["OFF", ""],
  ["A", "ll"],
  ["N", "oorigin"],
  ["OR", "igin"],
  ["S", "electable"],
  ["P", "roperties"],
];

function CommandLine() {
  return (
    <div className="flex h-[56px] bg-[#2a313d] pt-[1px]">
      <div className="flex w-[21px] flex-col items-center pt-[4px]">
        <div className="h-[3px] w-[14px] bg-[repeating-linear-gradient(to_right,#b5b8be_0_1px,transparent_1px_3px)]" />
        <Ic s={10} className="mt-[8px]"><path d="M1 1l8 8M9 1L1 9" stroke="#d5d7da" strokeWidth="1.8" /></Ic>
        <Ic s={12} className="mt-[10px]"><path d="M1 11l6-6" stroke="#c6c9ce" strokeWidth="2.4" /><path d="M6 6c-1-3 1-5 5-5L9 3.5l2 1.5C10 7.5 8 7.5 6 6z" fill="#c6c9ce" /></Ic>
      </div>
      <div className="flex min-w-0 flex-1 flex-col font-['DejaVu_Sans_Mono',monospace] text-[9.72px] text-[#333333]">
        <div className="flex h-[38px] flex-col justify-end bg-[#c9c9c9] pb-[1px] pl-[1px] leading-[12.5px]">
          <div className="whitespace-pre">Enter an option [ON/OFF/All/Noorigin/ORigin/Selectable/Properties] &lt;ON&gt;: *Cancel*</div>
          <div className="whitespace-pre">Command: UCSICON</div>
        </div>
        <div className="flex h-[17px] items-center bg-white leading-none">
          <span className="ml-[11px] w-[9px] text-[#cfcfcf]">1.</span>
          <Caret className="ml-[-1px] opacity-60" />
          <span className="ml-[5px] whitespace-pre text-[9.55px]">
            <span className="font-bold">UCSICON</span>
            {" Enter an option ["}
            {OPTIONS.map(([key, rest], i) => (
              <React.Fragment key={key}>
                <span className="bg-[#c9d0f3] text-[#2a2ab0]">{key}</span>
                {rest && <span className="bg-[#e6e8f5]">{rest}</span>}
                {i < OPTIONS.length - 1 && " "}
              </React.Fragment>
            ))}
            {"] <ON>:"}
          </span>
        </div>
      </div>
    </div>
  );
}

function StatusToggle({ on, className = "", children }) {
  return (
    <div className={`flex h-[19px] shrink-0 items-center justify-center ${on ? "bg-[#4f86b8]" : ""} ${className}`}>
      {children}
    </div>
  );
}

function StatusBar() {
  const w = "#c9ccd2";
  return (
    <div className="flex h-[29px] flex-col bg-[#1e2531]">
      <div className="flex h-[28px] items-center pr-[3px] text-[#b9bec6]">
        <Hamburger className="ml-[13px]" />
        <div className="ml-[9px] flex h-[21px] w-[50px] items-center bg-[#3a4352] pl-[13px] font-semibold text-[#e3e5e8] [clip-path:polygon(6px_0,100%_0,calc(100%-6px)_100%,0_100%)]">Model</div>
        <span className="ml-[11px]">Layout1</span>
        <Slash className="ml-[7px]" />
        <span className="ml-[8px]">Layout2</span>
        <Slash className="ml-[7px]" />
        <Plus className="ml-[9px]" />
        <Slash className="ml-[10px]" />

        <div className="ml-auto flex h-[24px] items-center bg-[#283040] pl-[3px] pr-[2px]">
          <span className="w-[38px] font-medium text-[#c9ccd2]">MODEL</span>
          <StatusToggle on className="w-[18px]">
            <Ic s={12}><path d="M3 0v12M6 0v12M9 0v12M0 3h12M0 6h12M0 9h12" stroke="#dfe3e8" /></Ic>
          </StatusToggle>
          <StatusToggle on className="ml-[2px] w-[19px]">
            <Ic s={12}><path d="M2 2h8M2 6h8M2 10h8" stroke="#dfe3e8" strokeDasharray="1.5 2" /></Ic>
          </StatusToggle>
          <Caret className="ml-[4px] scale-75" />
          <Ic s={14} className="ml-[9px]"><path d="M1 0v13h13" stroke={w} /><path d="M6 11h4" stroke="#7fa7c9" /></Ic>
          <Ic s={14} className="ml-[5px]"><path d="M10 2.5A6 6 0 1 0 12.5 8M7 7l6-6" stroke={w} /></Ic>
          <Caret className="ml-[7px] scale-75" />
          <Ic s={14} className="ml-[9px]"><path d="M3 0l8 14M7 0v14M1 7h12" stroke="#868b93" /></Ic>
          <Caret className="ml-[6px] scale-75" />
          <StatusToggle on className="ml-[5px] w-[18px]">
            <Ic s={12}><path d="M11 1L1 11h10" stroke="#dfe3e8" /></Ic>
          </StatusToggle>
          <StatusToggle on className="ml-[2px] w-[17px]">
            <Ic s={13}><rect x="2.5" y="2.5" width="10" height="10" stroke="#dfe3e8" /><rect x="0" y="0" width="4" height="4" fill="#dfe3e8" /></Ic>
          </StatusToggle>
          <Caret className="ml-[4px] scale-75" />
          <StatusToggle on className="ml-[8px] w-[18px]">
            <Ic s={14}><path d="M7 1L2 13M7 1l5 12" stroke="#eef0f3" strokeWidth="2.2" /><circle cx="12" cy="3" r="1.8" stroke="#eef0f3" /></Ic>
          </StatusToggle>
          <Ic s={14} className="ml-[4px]"><path d="M7 2L2 13M7 2l5 11" stroke={w} strokeWidth="2.2" /><path d="M12 0v5M9.5 2.5h5" stroke={w} /></Ic>
          <Ic s={14} className="ml-[3px]"><path d="M7 1L2 13M7 1l5 12" stroke={w} strokeWidth="2.2" /></Ic>
          <span className="ml-[9px] text-[#c9ccd2]">1:1</span>
          <Caret className="ml-[1px] scale-75" />
          <Ic s={16} className="ml-[9px]"><circle cx="8" cy="8" r="4" stroke={w} strokeWidth="2.5" /><path d="M8 0v3M8 13v3M0 8h3M13 8h3M2.5 2.5l2 2M11.5 11.5l2 2M13.5 2.5l-2 2M4.5 11.5l-2 2" stroke={w} strokeWidth="2.2" /></Ic>
          <Caret className="ml-[6px] scale-75" />
          <Ic s={14} className="ml-[8px]"><path d="M7 0v14M0 7h14" stroke={w} strokeWidth="1.5" /></Ic>
          <Ic s={14} className="ml-[8px]"><rect x=".5" y=".5" width="5" height="5" stroke={w} /><circle cx="11" cy="4" r="2.5" stroke={w} /><path d="M5 8l3 5H2z" stroke={w} /></Ic>
          <Ic s={15} className="ml-[7px]"><rect x=".5" y="2.5" width="14" height="10" stroke={w} /><path d="M9 5h3v2M3 10h3V8" stroke={w} /></Ic>
          <Hamburger className="ml-[8px]" />
        </div>
      </div>
      <div className="ml-[40px] h-[1px] w-[287px] bg-[#8d929a]" />
    </div>
  );
}

export default function App() {
  return (
    <div className="flex h-[868px] w-[1600px] flex-col overflow-hidden bg-[#1e2531] font-['Roboto',sans-serif] text-[10px]">
      <TitleBar />
      <RibbonTabs />
      <Ribbon />
      <DocTabs />
      <div className="h-[4px] bg-[#3a4250]" />
      <Canvas />
      <CommandLine />
      <StatusBar />
    </div>
  );
}
